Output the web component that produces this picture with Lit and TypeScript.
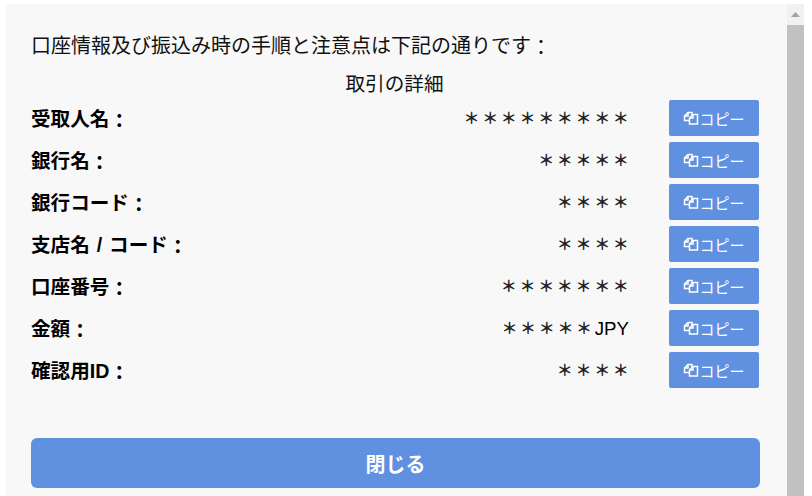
import { LitElement, html, css, svg } from "lit";
import { customElement } from "lit/decorators.js";

const rows: { label: string; stars: number; unit?: string }[] = [
  { label: "受取人名", stars: 9 },
  { label: "銀行名", stars: 5 },
  { label: "銀行コード", stars: 4 },
  { label: "支店名 / コード", stars: 4 },
  { label: "口座番号", stars: 7 },
  { label: "金額", stars: 5, unit: "JPY" },
  { label: "確認用ID", stars: 4 },
];

const copyIcon = svg`<path d="M6 9.500H1.500V5L5 1.500h4V4" /><path d="M1.500 5H5V1.500" /><path d="M6.500 13H14.500V3.500H10L6.500 7z" /><path d="M6.500 7H10V3.500" />`;

@customElement("app-root")
export class AppRoot extends LitElement {
  static styles = css`
    :host {
      display: flex;
      width: 812px;
      height: 496px;
      background: #fff;
      overflow: hidden;
      font-family: "Liberation Sans", "Noto Sans CJK JP", sans-serif;
      color: #111;
      box-sizing: border-box;
      padding: 4px 8px 0 6px;
    }
    .panel {
      flex: 1;
      background: #f8f8f8;
      padding: 28px 27px 0 25px;
      box-sizing: border-box;
      min-width: 0;
    }
    .intro {
      font-size: 20px;
      line-height: 26px;
      padding-top: 1px;
      margin-bottom: 12px;
    }
    .colon {
      display: inline-block;
      line-height: 1;
      transform: translateY(2px);
    }
    .heading {
      font-size: 19.600px;
      line-height: 26px;
      text-align: center;
      margin-bottom: 3px;
      padding-right: 2px;
    }
    .rows {
      display: flex;
      flex-direction: column;
      gap: 6px;
      padding-right: 1px;
    }
    .row {
      display: flex;
      align-items: center;
      height: 36px;
    }
    .label {
      font-size: 19.600px;
      line-height: 24px;
      padding-top: 2px;
      font-weight: 700;
      word-spacing: 1.500px;
      color: #000;
      white-space: nowrap;
    }
    .value {
      flex: 1;
      display: flex;
      justify-content: flex-end;
      align-items: center;
      font-size: 18.670px;
      line-height: 24px;
      padding-top: 2px;
      color: #000;
      white-space: nowrap;
      margin-right: 40px;
    }
    .stars {
      font-size: 16px;
      font-weight: 700;
      letter-spacing: 2.670px;
      color: #222;
    }
    .stars:last-child {
      margin-right: -2.500px;
    }
    .copy {
      display: flex;
      align-items: center;
      justify-content: center;
      width: 90px;
      height: 36px;
      padding: 0;
      background: #6090e0;
      color: #fff;
      border: none;
      border-radius: 2px;
      font: inherit;
      font-size: 15px;
      flex: none;
    }
    .copy svg {
      width: 16px;
      height: 14px;
      fill: none;
      stroke: #fff;
      stroke-width: 1.500;
    }
    .close {
      display: block;
      width: 729px;
      height: 50px;
      margin-top: 50px;
      background: #6090e0;
      color: #fff;
      border: none;
      border-radius: 6px;
      font: inherit;
      font-size: 20px;
      font-weight: 700;
    }
    .scrollbar {
      width: 17px;
      flex: none;
      background: #f1f1f1;
      display: flex;
      flex-direction: column;
    }
    .arrow {
      height: 21px;
      display: flex;
      align-items: center;
      justify-content: center;
    }
    .arrow svg {
      width: 9px;
      height: 5px;
      fill: #a3a3a3;
    }
    .thumb {
      flex: 1;
      background: #c1c1c1;
    }
  `;

  render() {
    return html`
      <div class="panel" lang="ja">
        <div class="intro">口座情報及び振込み時の手順と注意点は下記の通りです<span class="colon">：</span></div>
        <div class="heading">取引の詳細</div>
        <div class="rows">
          ${rows.map(
            (r) => html`
              <div class="row">
                <span class="label">${r.label}<span class="colon">：</span></span>
                <span class="value"><span class="stars">${"＊".repeat(r.stars)}</span>${r.unit ? html`<span>${r.unit}</span>` : ""}</span>
                <button class="copy">
                  <svg viewBox="0 0 16 14">${copyIcon}</svg>コピー
                </button>
              </div>
            `
          )}
        </div>
        <button class="close">閉じる</button>
      </div>
      <div class="scrollbar">
        <div class="arrow"><svg viewBox="0 0 9 5"><path d="M4.500 0L9 5H0z" /></svg></div>
        <div class="thumb"></div>
      </div>
    `;
  }
}
